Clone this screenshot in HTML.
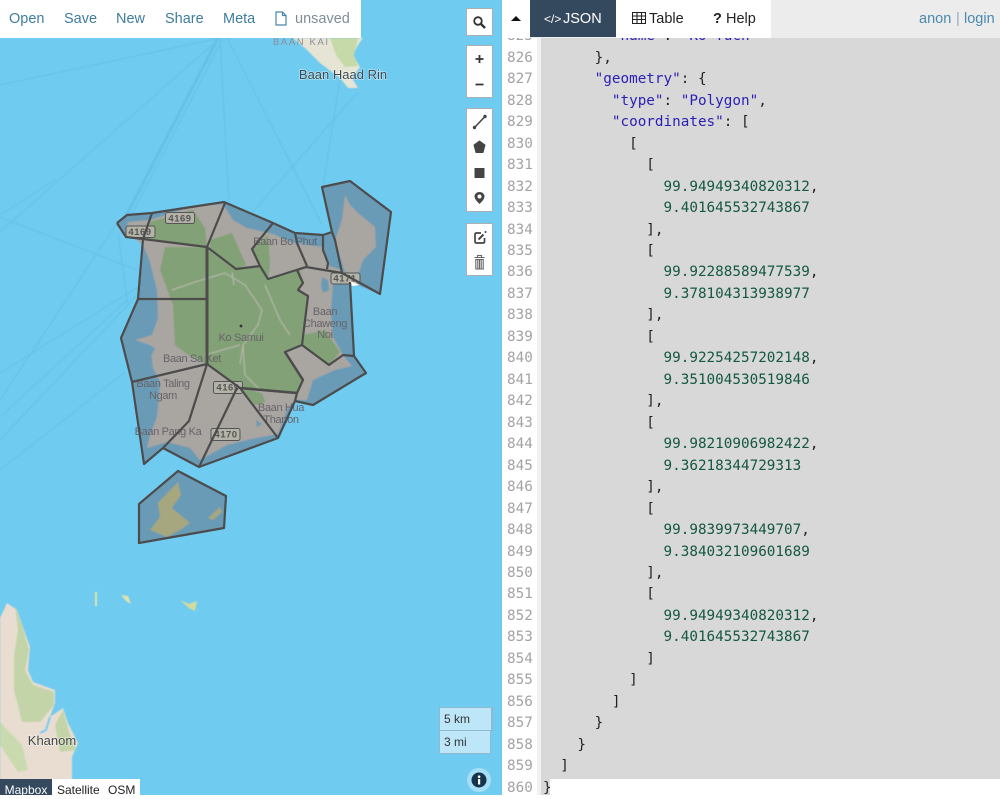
<!DOCTYPE html>
<html>
<head>
<meta charset="utf-8">
<style>
html,body{margin:0;padding:0;width:1000px;height:795px;overflow:hidden;background:#fff;font-family:"Liberation Sans",sans-serif}
#map{position:absolute;left:0;top:0;width:502px;height:795px;background:#70cbf0;overflow:hidden}
#map svg{position:absolute;left:0;top:0}
#bar{position:absolute;left:0;top:0;width:361px;height:38px;background:#fff;font-size:14.5px;color:#3f7da0}
#bar span{position:absolute;top:11px;line-height:17px}
.ctl{position:absolute;left:466px;width:25px;background:#fff;border:1px solid #a9b0b4}
#gutter{position:absolute;left:502px;top:0;width:35px;height:795px;background:#fff}
#strip{position:absolute;left:537px;top:0;width:4px;height:795px;background:#f1f1f1}
#codebg{position:absolute;left:541px;top:0;width:459px;height:779px;background:#d8d8d8}
#last{position:absolute;left:541px;top:779px;width:9px;height:16px;background:#d8d8d8}
pre{position:absolute;margin:0;font-family:"DejaVu Sans Mono","Liberation Mono",monospace;font-size:14.3px;line-height:21.47px;top:26.3px}
#nums{left:507px;color:#a3a3a3}
#code{left:543px;color:#222}
.k{color:#2a1fb4}.n{color:#14583f}
#top{position:absolute;left:502px;top:0;width:498px;height:38px;background:#ececec;font-size:14.5px}
#top div,#top span{position:absolute}
</style>
</head>
<body>
<div id="map">
<svg width="502" height="795" viewBox="0 0 502 795" xmlns="http://www.w3.org/2000/svg">
  <defs><filter id="b" x="-5%" y="-5%" width="110%" height="110%"><feGaussianBlur stdDeviation=".45"/></filter></defs>
  <g filter="url(#b)">
  <!-- faint radial lines -->
  <g stroke="#5fb6de" fill="none" stroke-width="1" opacity=".5">
    <path d="M220 38L0 85M220 38L0 232M220 38L229 202M227 38L322 225M340 78L323 187M358 92L250 215M0 217L137 270M117 223L0 400M138 287L0 373M127 300L0 417M137 295L0 440M125 372L0 470M55 180L0 215M118 233L128 307"/>
    <path d="M218 38L125 218" stroke-width="3"/>
    <path d="M223 38L130 218" stroke-width="1"/>
  </g>
  <!-- Koh Phangan south tip -->
  <path d="M293 38L307 50L320 63L340 78L348 88L358 88L352 78L360 67L353 55L358 45L363 38Z" fill="#e6e4d4"/>
  <path d="M330 38L358 38L354 55L358 66L345 67L336 55Z" fill="#c5daa8"/>
  <!-- mainland -->
  <path d="M0 618L7 603L17 610L23 627L30 647L28 670L33 682L55 690L55 703L50 717L63 708L68 723L78 743L72 757L72 795L0 795Z" fill="#e8ddd0"/>
  <path d="M15 606L22 625L29 650L25 670L33 685L54 692L54 705L40 722L22 722L14 690L14 655L18 630Z" fill="#c3d5a8"/>
  <path d="M55 725L63 710L70 735L76 750L60 752Z" fill="#c3d5a8"/>
  <path d="M0 722L22 745L28 770L18 772L0 745Z" fill="#c9dbae"/>
  <path d="M50 717L46 730L40 733" fill="none" stroke="#70cbf0" stroke-width="2"/>
  <!-- islets -->
  <path d="M95 592L97 592L97 606L95 606Z" fill="#e0e0ac"/>
  <path d="M121 595L128 596L131 604L126 601Z" fill="#dfe2ab"/>
  <path d="M180 600L189 604L197 601L195 611L189 608Z" fill="#d4dc9c"/>

  <!-- overlay water fill -->
  <path d="M117 223L127 215L152 213L224 202L273 223L295 233L323 235L332 232L322 187L350 181L391 212L380 294L350 282L354 356L366 373L313 405L295 401L278 438L199 467L163 448L144 464L132 382L121 338L138 299L143 239L126 237Z" fill="#6b9bb6"/>
  <path d="M139 504L178 471L226 496L224 528L139 543Z" fill="#6b9bb6"/>
  <!-- land grey -->
  <path d="M128 222L150 220L193 206L223 204L233 220L247 228L273 234L293 243L323 247L329 266L342 270L333 283L331 310L333 337L343 355L352 366L335 370L313 380L307 400L295 400L287 410L278 434L247 440L227 445L200 460L190 448L167 442L147 448L150 435L157 417L160 382L153 368L150 345L135 340L152 335L158 318L157 290L150 262L143 245L126 232Z" fill="#a9a5a1"/>
  <path d="M345 195L350 205L358 213L375 227L376 247L363 260L358 275L345 272L335 240L342 220Z" fill="#a9a5a1"/>
  <path d="M178 482L181 495L172 508L190 523L180 530L167 537L150 530L160 517L158 503Z" fill="#a6a67f"/>
  <path d="M220 507L222 512L213 520L208 518Z" fill="#a6a67f"/>
  <!-- green -->
  <path d="M148 235L150 222L193 210L205 228L207 247L145 239Z" fill="#82a176"/>
  <path d="M165 247L207 247L207 364L190 356L175 345L173 305L160 270Z" fill="#82a176"/>
  <path d="M208 250L236 269L260 266L268 279L300 270L303 283L298 290L307 296L302 345L285 352L303 380L297 393L240 388L207 364Z" fill="#82a176"/>
  <path d="M210 240L232 233L246 265L236 269L210 250Z" fill="#82a176"/>
  <path d="M252 250L268 235L270 265L268 279L260 266Z" fill="#82a176"/>
  <path d="M303 335L325 330L340 352L329 365L302 345Z" fill="#82a176"/>
  <path d="M240 388L262 393L265 402L255 405Z" fill="#82a176"/>
  <!-- roads -->
  <g fill="none" stroke="#b1b5a6" stroke-width="1.300">
    <path d="M172 290L195 282L225 273L245 285L262 310L258 325L243 345L240 364M232 272L234 285M265 285L280 320L290 335M240 345L205 355M243 345L245 375L262 392"/>
  </g>
  <!-- lakes -->
  <path d="M322 277L328 280L329 290L323 293L321 286Z" fill="#6b9bb6"/>
  <path d="M150 345L155 348L152 355L149 352Z" fill="#6b9bb6"/>
  <path d="M256 420L262 424L257 427Z" fill="#6b9bb6"/>
  </g>
  <!-- labels under lines -->
  <g font-family="Liberation Sans,sans-serif" font-size="11" letter-spacing="-.35" fill="#67636a" text-anchor="middle">
    <text x="285" y="245">Baan Bo Phut</text>
    <text x="325" y="315">Baan</text>
    <text x="325" y="327">Chaweng</text>
    <text x="325" y="338">Noi</text>
    <text x="241" y="341">Ko Samui</text>
    <text x="192" y="362">Baan Sa Ket</text>
    <text x="163" y="387">Baan Taling</text>
    <text x="163" y="399">Ngam</text>
    <text x="168" y="435">Baan Pang Ka</text>
    <text x="281" y="411">Baan Hua</text>
    <text x="281" y="423">Thanon</text>
  </g>
  <circle cx="241" cy="326" r="1.400" fill="#333"/>
  <!-- road shields -->
  <g font-family="Liberation Sans,sans-serif" font-size="9.500" font-weight="bold" fill="#555" text-anchor="middle" letter-spacing=".5">
    <rect x="165.500" y="212.500" width="29" height="11" rx="2" fill="#b4b3a8" stroke="#555"/><text x="180" y="221.500">4169</text>
    <rect x="126" y="226" width="29" height="11.500" rx="2" fill="#b4b3a8" stroke="#555"/><text x="140" y="235">4169</text>
    <rect x="331" y="273" width="29" height="11" rx="2" fill="#b4b3a8" stroke="#555"/><text x="345" y="281.500">4171</text>
    <rect x="213.500" y="381.500" width="29" height="12" rx="2" fill="#b4b3a8" stroke="#555"/><text x="228" y="390.500">4169</text>
    <rect x="211" y="428.500" width="29" height="12" rx="2" fill="#b4b3a8" stroke="#555"/><text x="226" y="437.500">4170</text>
  </g>
  <path d="M350 281L360 285L352 286Z" fill="#fff"/>
  <!-- polygon lines -->
  <g fill="none" stroke="#4c4c4c" stroke-width="2.200" stroke-linejoin="round">
    <path d="M117 223L127 215L152 213L224 202L273 223L295 233L323 235L332 232L322 187L350 181L391 212L380 294L342 273"/>
    <path d="M117 223L126 237L143 239L207 247L225 203"/>
    <path d="M152 213L143 239L138 299L121 338L132 382L144 464L163 448L199 467L278 438L295 401L313 405L366 373L354 356L350 282"/>
    <path d="M138 299L206 299"/>
    <path d="M132 382L207 364L189 421L163 448"/>
    <path d="M207 247L236 269L260 266L268 279L306 267L342 273"/>
    <path d="M260 266L252 249L273 223"/>
    <path d="M295 233L297 243L307 266"/>
    <path d="M306 267L297 270L303 283L298 290L308 296L302 345L329 365L343 355L354 356"/>
    <path d="M323 235L323 250L328 263L327 269"/>
    <path d="M332 232L335 240L342 273"/>
    <path d="M302 345L285 352L303 380L297 393L240 388L207 364"/>
    <path d="M199 467L237 388"/>
    <path d="M240 388L278 438"/>
    <path d="M295 401L297 393"/>
    <path d="M139 504L178 471L226 496L224 528L139 543Z"/>
  </g>
  <path d="M207 247L207 364" fill="none" stroke="#4c4c4c" stroke-width="3"/>
  <path d="M285 352L303 380M240 388L297 393" fill="none" stroke="#4c4c4c" stroke-width="2.500"/>
  <!-- place names -->
  <g font-family="Liberation Sans,sans-serif" text-anchor="middle" stroke="#fff" stroke-width="1.500" paint-order="stroke" stroke-opacity=".45">
    <text x="343" y="79" font-size="13" fill="#3e4a50">Baan Haad Rin</text>
    <text x="52" y="745" font-size="13" fill="#444">Khanom</text>
  </g>
  <text x="273" y="45" font-family="Liberation Sans,sans-serif" font-size="9.500" letter-spacing="1.600" fill="#8c8c96">BAAN KAI</text>
</svg>

<div id="bar">
  <span style="left:9px">Open</span>
  <span style="left:64px">Save</span>
  <span style="left:116px">New</span>
  <span style="left:165px">Share</span>
  <span style="left:223px">Meta</span>
  <svg style="position:absolute;left:275px;top:11px;width:12px;height:15px" viewBox="0 0 12 15"><path d="M1 1H7.500L11 4.500V14H1ZM7.500 1V4.500H11" fill="none" stroke="#4a86a8" stroke-width="1.200"/></svg>
  <span style="left:295px;color:#7f8d97">unsaved</span>
</div>

<div class="ctl" style="top:8px;height:26px">
  <svg width="25" height="26" viewBox="0 0 25 26"><circle cx="11" cy="12" r="3.800" fill="none" stroke="#333" stroke-width="1.800"/><path d="M14 15L18 19" stroke="#333" stroke-width="2.400"/></svg>
</div>
<div class="ctl" style="top:45px;height:51px">
  <svg width="25" height="51" viewBox="0 0 25 51"><path d="M12.500 9V17M8.500 13H16.500M8.500 38.500H16.500" stroke="#333" stroke-width="1.800" fill="none"/></svg>
</div>
<div class="ctl" style="top:108px;height:102px">
  <svg width="25" height="102" viewBox="0 0 25 102"><path d="M8 18L17.500 8" stroke="#444" stroke-width="1.600"/><circle cx="7.500" cy="18.500" r="1.700" fill="#444"/><circle cx="18" cy="7.500" r="1.700" fill="#444"/><path d="M12.500 32L18 36L16 43.500H9L7 36Z" fill="#444" stroke="#444" stroke-linejoin="round"/><rect x="7.500" y="59" width="10" height="10" fill="#444"/><path d="M12.500 83C9.500 83 7.500 85 7.500 87.500C7.500 90.500 12.500 95 12.500 95C12.500 95 17.500 90.500 17.500 87.500C17.500 85 15.500 83 12.500 83Z" fill="#444"/><circle cx="12.500" cy="87.500" r="2" fill="#fff"/></svg>
</div>
<div class="ctl" style="top:223px;height:51px">
  <svg width="25" height="51" viewBox="0 0 25 51"><path d="M14 9H9.500Q8 9 8 10.500V17.500Q8 19 9.500 19H16Q17.500 19 17.500 17.500V14" fill="none" stroke="#444" stroke-width="1.700"/><path d="M11.500 15.500L16.500 10.500" stroke="#444" stroke-width="2"/><circle cx="18.500" cy="8" r="1" fill="#444"/><path d="M7.500 33.500H17.500M10.500 33.500V31.500H14.500V33.500M8.800 35.500V45H16.200V35.500ZM10.800 36V44.500M12.500 36V44.500M14.200 36V44.500" fill="none" stroke="#666" stroke-width="1.100"/></svg>
</div>

<div style="position:absolute;left:439px;top:707px;width:51px;height:22px;background:#bde6f8;border:1px solid #8fb9cd;border-width:1px 2px 1px 1px;font-size:12px;color:#333;line-height:22px;text-indent:4px">5 km</div>
<div style="position:absolute;left:439px;top:730px;width:50px;height:22px;background:#bde6f8;border:1px solid #8fb9cd;font-size:12px;color:#333;line-height:22px;text-indent:4px">3 mi</div>
<div style="position:absolute;left:467px;top:768px;width:24px;height:24px;border-radius:50%;background:#a5def6"></div>
<svg style="position:absolute;left:471px;top:772px" width="16" height="16" viewBox="0 0 16 16"><circle cx="8" cy="8" r="7.500" fill="#16344a"/><rect x="7" y="7" width="2.200" height="5.500" fill="#fff"/><circle cx="8.100" cy="4.700" r="1.300" fill="#fff"/></svg>

<div style="position:absolute;left:0;top:779px;width:140px;height:16px;background:#fff;font-size:12px;line-height:22px;color:#222;overflow:hidden">
  <span style="position:absolute;left:0;top:0;width:52px;height:16px;background:#34495e;color:#fff;text-align:center">Mapbox</span>
  <span style="position:absolute;left:57px;top:0">Satellite</span>
  <span style="position:absolute;left:108px;top:0">OSM</span>
</div>
</div>

<div id="gutter"></div>
<div id="strip"></div>
<div id="codebg"></div>
<div id="last"></div>
<pre id="nums">825
826
827
828
829
830
831
832
833
834
835
836
837
838
839
840
841
842
843
844
845
846
847
848
849
850
851
852
853
854
855
856
857
858
859
860</pre>
<pre id="code">        <span class="k">"name"</span>: <span class="k">"Ko Tuch"</span>
      },
      <span class="k">"geometry"</span>: {
        <span class="k">"type"</span>: <span class="k">"Polygon"</span>,
        <span class="k">"coordinates"</span>: [
          [
            [
              <span class="n">99.94949340820312</span>,
              <span class="n">9.401645532743867</span>
            ],
            [
              <span class="n">99.92288589477539</span>,
              <span class="n">9.378104313938977</span>
            ],
            [
              <span class="n">99.92254257202148</span>,
              <span class="n">9.351004530519846</span>
            ],
            [
              <span class="n">99.98210906982422</span>,
              <span class="n">9.36218344729313</span>
            ],
            [
              <span class="n">99.9839973449707</span>,
              <span class="n">9.384032109601689</span>
            ],
            [
              <span class="n">99.94949340820312</span>,
              <span class="n">9.401645532743867</span>
            ]
          ]
        ]
      }
    }
  ]
}</pre>

<div id="top">
  <div style="left:0;top:0;width:28px;height:38px;background:#fff"></div>
  <svg style="position:absolute;left:9px;top:15px" width="10" height="7" viewBox="0 0 10 7"><path d="M0 6L5 1L10 6Z" fill="#111"/></svg>
  <div style="left:28px;top:0;width:86px;height:37px;background:#34495e"></div>
  <div style="left:114px;top:0;width:155px;height:38px;background:#fff"></div>
  <span style="left:42px;top:11px;color:#fff;line-height:17px;font-size:12px">&lt;/&gt;</span>
  <span style="left:61px;top:11px;color:#fff;line-height:17px">JSON</span>
  <svg style="position:absolute;left:130px;top:12px" width="14" height="12" viewBox="0 0 14 12"><path d="M.5 .5H13.500V11.500H.5ZM.5 4H13.500M.5 7.500H13.500M5 .5V11.500M9.500 .5V11.500" fill="none" stroke="#222" stroke-width="1.100"/></svg>
  <span style="left:147px;top:11px;color:#222;line-height:17px">Table</span>
  <span style="left:211px;top:11px;color:#222;line-height:17px;font-weight:bold">?</span>
  <span style="left:224px;top:11px;color:#222;line-height:17px">Help</span>
  <span style="left:417px;top:11px;color:#4a8aae;line-height:17px">anon</span>
  <span style="left:454px;top:11px;color:#9ab;line-height:17px">|</span>
  <span style="left:462px;top:11px;color:#4a8aae;line-height:17px">login</span>
</div>
</body>
</html>
